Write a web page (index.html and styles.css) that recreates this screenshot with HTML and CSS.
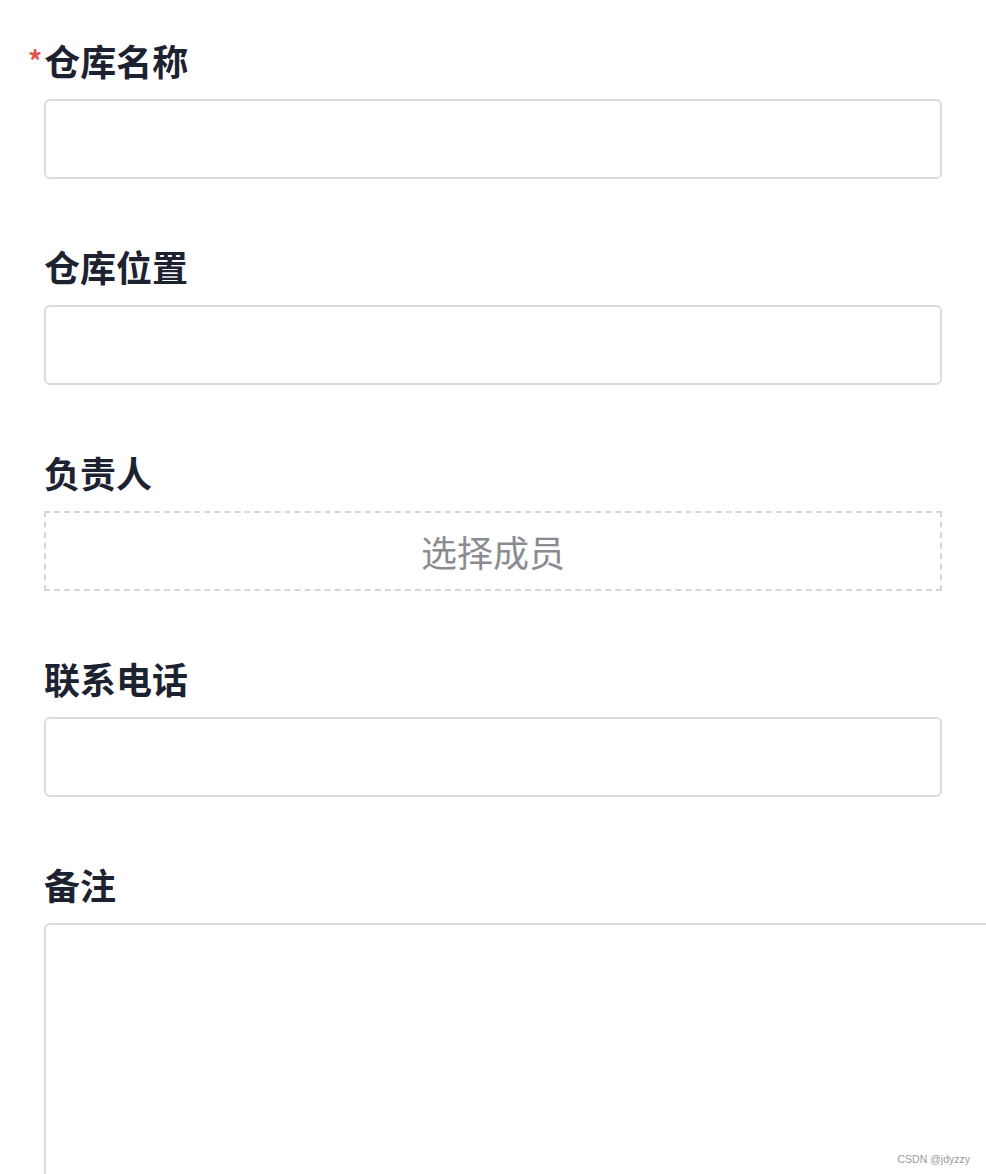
FILE: index.html
```html
<!DOCTYPE html>
<html lang="zh">
<head>
<meta charset="utf-8">
<link rel="stylesheet" href="styles.css">
</head>
<body>
<form class="form">
  <div class="item">
    <div class="label"><span class="req">*</span>仓库名称</div>
    <div class="input"></div>
  </div>
  <div class="item">
    <div class="label">仓库位置</div>
    <div class="input"></div>
  </div>
  <div class="item">
    <div class="label">负责人</div>
    <div class="picker">选择成员</div>
  </div>
  <div class="item">
    <div class="label">联系电话</div>
    <div class="input"></div>
  </div>
  <div class="item last">
    <div class="label">备注</div>
    <div class="textarea"></div>
  </div>
</form>
<div class="watermark">CSDN @jdyzzy</div>
</body>
</html>
```
FILE: styles.css
```css
html, body {
  margin: 0;
  padding: 0;
  background: #ffffff;
  width: 986px;
  height: 1174px;
  overflow: hidden;
  position: relative;
}
body {
  font-family: "Noto Sans CJK SC", "Noto Sans", sans-serif;
}
.form {
  padding: 37px 0 0 44px;
  display: flex;
  flex-direction: column;
}
.item {
  display: flex;
  flex-direction: column;
  margin-bottom: 64px;
}
.item.last {
  margin-bottom: 0;
}
.label {
  height: 46px;
  line-height: 46px;
  font-size: 36px;
  font-weight: 700;
  color: #1d2230;
  margin-bottom: 16px;
  white-space: nowrap;
}
.req {
  color: #e0564c;
  font-size: 28px;
  margin-left: -16px;
  margin-right: 2px;
  vertical-align: top;
}
.input {
  box-sizing: border-box;
  width: 898px;
  height: 80px;
  border: 2px solid #dcdcdf;
  border-radius: 6px;
}
.picker {
  box-sizing: border-box;
  width: 898px;
  height: 80px;
  border: 2px dashed #d6d6d9;
  display: flex;
  align-items: center;
  justify-content: center;
  font-size: 36px;
  color: #8a8c92;
}
.textarea {
  box-sizing: border-box;
  width: 942px;
  height: 253px;
  border-top: 2px solid #dcdcdf;
  border-left: 2px solid #dcdcdf;
  border-top-left-radius: 6px;
}
.watermark {
  position: absolute;
  right: 16px;
  bottom: 9px;
  font-family: "Liberation Sans", Arial, sans-serif;
  font-size: 10.5px;
  color: #9a9a9a;
}
```
